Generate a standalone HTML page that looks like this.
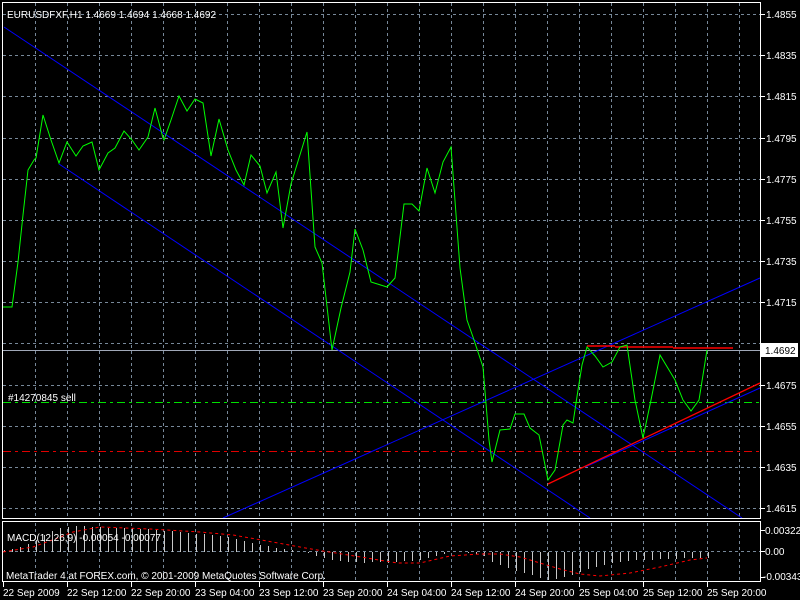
<!DOCTYPE html>
<html><head><meta charset="utf-8"><style>
html,body{margin:0;padding:0;background:#000;width:800px;height:600px;overflow:hidden}
svg{display:block}
text{font-family:"Liberation Sans",sans-serif;font-size:10px;fill:#fff}
</style></head><body>
<svg width="800" height="600" viewBox="0 0 800 600" xmlns="http://www.w3.org/2000/svg">
<rect width="800" height="600" fill="#000"/>
<g stroke="#778899" stroke-width="1" stroke-dasharray="3,3" shape-rendering="crispEdges">
<path d="M3 14.5H760M3 55.5H760M3 96.5H760M3 138.5H760M3 179.5H760M3 220.5H760M3 261.5H760M3 302.5H760M3 343.5H760M3 385.5H760M3 426.5H760M3 467.5H760M3 508.5H760"/>
<path d="M35.5 3V518M67.5 3V518M99.5 3V518M131.5 3V518M163.5 3V518M195.5 3V518M227.5 3V518M259.5 3V518M291.5 3V518M323.5 3V518M355.5 3V518M387.5 3V518M419.5 3V518M451.5 3V518M483.5 3V518M515.5 3V518M547.5 3V518M579.5 3V518M611.5 3V518M643.5 3V518M675.5 3V518M707.5 3V518M739.5 3V518"/>
<path d="M35.5 523V581M67.5 523V581M99.5 523V581M131.5 523V581M163.5 523V581M195.5 523V581M227.5 523V581M259.5 523V581M291.5 523V581M323.5 523V581M355.5 523V581M387.5 523V581M419.5 523V581M451.5 523V581M483.5 523V581M515.5 523V581M547.5 523V581M579.5 523V581M611.5 523V581M643.5 523V581M675.5 523V581M707.5 523V581M739.5 523V581"/>
<path d="M3 551.5H760"/>
</g>
<path d="M3 402.5H760" stroke="#00e000" stroke-dasharray="8,4,3,4" shape-rendering="crispEdges"/>
<path d="M3 451.5H760" stroke="#e00000" stroke-dasharray="8,4,3,4" shape-rendering="crispEdges"/>
<path d="M3 350.5H760" stroke="#a0a8b8" shape-rendering="crispEdges"/>
<g stroke="#0000ff" stroke-width="1" fill="none">
<path d="M4 27L742 518"/>
<path d="M59 164L590 518"/>
<path d="M223 518L760 278"/>
<path d="M585 467L760 388"/>
</g>
<path d="M548 484L760 383" stroke="#ff0000" stroke-width="1.3" fill="none"/>
<path d="M587 346H615M615 347H673M673 348H733" stroke="#ff0000" stroke-width="1.5" fill="none"/>
<polyline fill="none" stroke="#00ff00" stroke-width="1" points="3,307 12,307 18,262 23,215 28,170 34,160 36,158 43,115 51,140 59,163 67,142 76,156 83,146 92,142 99,170 108,153 115,148 124,131 132,140 139,150 148,137 155,108 163,138 164,140 171,120 179,96 187,111 195,99 203,103 211,156 219,119 228,150 236,170 244,185 251,155 260,166 267,193 276,172 283,228 291,184 307,132 315,247 322,263 332,350 341,308 350,272 355,229 363,250 371,282 387,287 395,278 404,204 412,204 419,211 427,168 435,193 443,162 451,147 460,268 467,320 473,337 483,367 489,440 492,462 500,430 510,429 515,414 524,414 530,428 539,435 548,480 555,470 563,425 567,420 573,423 578,390 582,365 587,347 595,356 603,367 612,362 620,347 627,345 635,400 643,438 651,400 660,355 675,380 683,400 691,411 699,400 707,350"/>
<g stroke="#fff" fill="none" shape-rendering="crispEdges">
<rect x="2.5" y="2.5" width="758" height="516"/>
<rect x="2.5" y="521.5" width="758" height="60"/>
<path d="M761 14.5h4M761 55.5h4M761 96.5h4M761 138.5h4M761 179.5h4M761 220.5h4M761 261.5h4M761 302.5h4M761 343.5h4M761 385.5h4M761 426.5h4M761 467.5h4M761 508.5h4M761 530.5h4M761 551.5h4M761 577.5h4"/>
<path d="M3.5 582v5M67.5 582v5M131.5 582v5M195.5 582v5M259.5 582v5M323.5 582v5M387.5 582v5M451.5 582v5M515.5 582v5M579.5 582v5M643.5 582v5M707.5 582v5"/>
</g>
<path stroke="#c8c8c8" stroke-width="1" fill="none" shape-rendering="crispEdges" d="M4.5 552V550M12.5 552V549M20.5 552V547M28.5 552V544M36.5 552V540M44.5 552V535M52.5 552V531M60.5 552V528M68.5 552V527M76.5 552V526M84.5 552V526M92.5 552V527M100.5 552V527M108.5 552V528M116.5 552V528M124.5 552V528M132.5 552V528M140.5 552V529M148.5 552V529M156.5 552V530M164.5 552V531M172.5 552V531M180.5 552V532M188.5 552V533M196.5 552V534M204.5 552V534M212.5 552V535M220.5 552V536M228.5 552V537M236.5 552V539M244.5 552V541M252.5 552V543M260.5 552V545M268.5 552V546M276.5 552V548M284.5 552V549M292.5 552V550M308.5 552V553M316.5 552V556M324.5 552V558M332.5 552V560M340.5 552V561M348.5 552V562M356.5 552V562M364.5 552V563M372.5 552V562M380.5 552V562M388.5 552V563M396.5 552V562M404.5 552V561M412.5 552V561M420.5 552V560M428.5 552V558M436.5 552V556M444.5 552V554M468.5 552V553M476.5 552V554M484.5 552V556M492.5 552V562M500.5 552V565M508.5 552V568M516.5 552V571M524.5 552V573M532.5 552V575M540.5 552V578M548.5 552V580M556.5 552V579M564.5 552V577M572.5 552V575M580.5 552V572M588.5 552V569M596.5 552V567M604.5 552V565M612.5 552V563M620.5 552V562M628.5 552V561M636.5 552V560M644.5 552V560M652.5 552V560M660.5 552V559M668.5 552V559M676.5 552V559M684.5 552V558M692.5 552V558M700.5 552V558M708.5 552V558"/>
<polyline fill="none" stroke="#ff0000" stroke-width="1" stroke-dasharray="3,3" points="3,552 33,547 55,539 73,532 100,527 150,529 200,532 233,535 267,541 300,547 323,551 367,558 397,563 420,563 450,556 480,554 500,554 520,557 540,563 560,569 580,574 600,576 630,573 660,567 690,560 707,558"/>
<rect x="761" y="343" width="37" height="14" fill="#fff"/>
<text x="765" y="354" style="fill:#000">1.4692</text>
<text x="7" y="18">EURUSDFXF,H1  1.4669 1.4694 1.4668 1.4692</text>
<text x="8" y="401">#14270845 sell</text>
<text x="7" y="541">MACD(12,26,9) -0.00054 -0.00077</text>
<text x="6" y="579">MetaTrader 4 at FOREX.com, © 2001-2009 MetaQuotes Software Corp.</text>
<g>
<text x="766" y="18">1.4855</text>
<text x="766" y="59">1.4835</text>
<text x="766" y="100">1.4815</text>
<text x="766" y="142">1.4795</text>
<text x="766" y="183">1.4775</text>
<text x="766" y="224">1.4755</text>
<text x="766" y="265">1.4735</text>
<text x="766" y="306">1.4715</text>
<text x="766" y="389">1.4675</text>
<text x="766" y="430">1.4655</text>
<text x="766" y="471">1.4635</text>
<text x="766" y="512">1.4615</text>
<text x="765" y="534">0.00322</text>
<text x="765" y="555">0.00</text>
<text x="763" y="580">-0.00343</text>
</g>
<g>
<text x="3" y="596">22 Sep 2009</text>
<text x="67" y="596">22 Sep 12:00</text>
<text x="131" y="596">22 Sep 20:00</text>
<text x="195" y="596">23 Sep 04:00</text>
<text x="259" y="596">23 Sep 12:00</text>
<text x="323" y="596">23 Sep 20:00</text>
<text x="387" y="596">24 Sep 04:00</text>
<text x="451" y="596">24 Sep 12:00</text>
<text x="515" y="596">24 Sep 20:00</text>
<text x="579" y="596">25 Sep 04:00</text>
<text x="643" y="596">25 Sep 12:00</text>
<text x="707" y="596">25 Sep 20:00</text>
</g>
</svg>
</body></html>
